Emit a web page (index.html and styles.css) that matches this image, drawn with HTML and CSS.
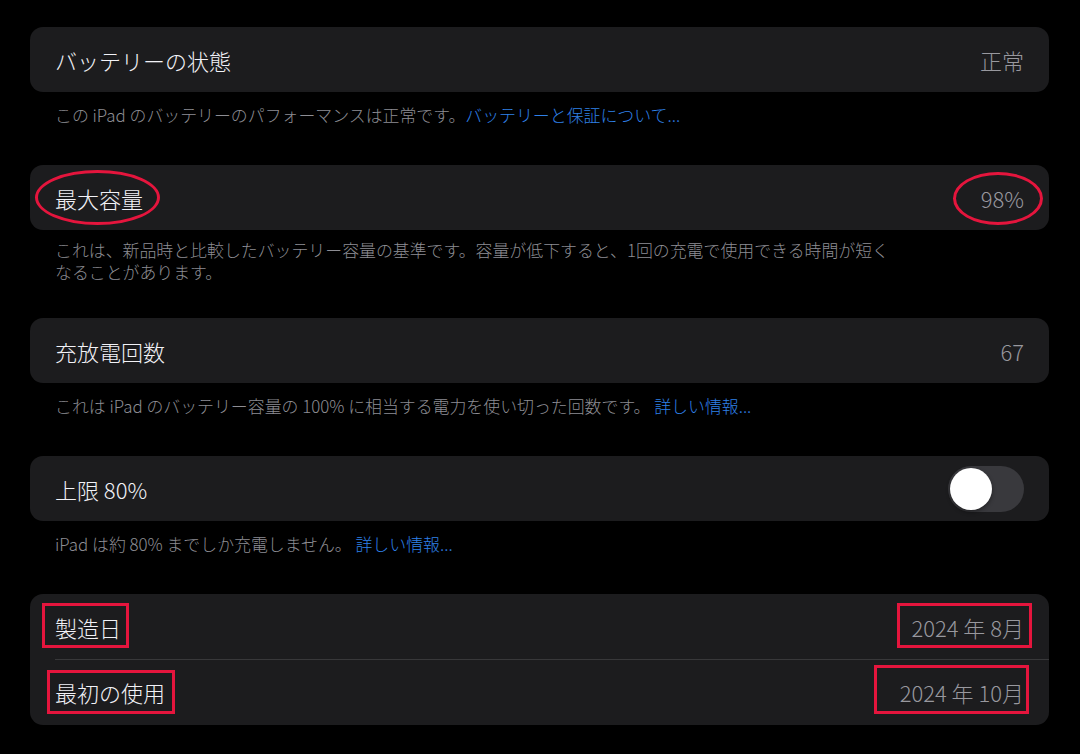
FILE: index.html
```html
<!DOCTYPE html>
<html lang="ja">
  <head>
    <meta charset="UTF-8" />
    <meta name="viewport" content="width=device-width, initial-scale=1.0" />
    <title>バッテリーの状態</title>
    <link rel="stylesheet" href="styles.css">
  </head>
  <body>
    <div class="page">
      <section class="group">
        <div class="card">
          <div class="row">
            <span class="label">バッテリーの状態</span>
            <span class="value">正常</span>
          </div>
        </div>
        <p class="footer">この iPad のバッテリーのパフォーマンスは正常です。<a class="link">バッテリーと保証について...</a></p>
      </section>

      <section class="group tight">
        <div class="card">
          <div class="row">
            <span class="label mark ellipse-a">最大容量</span>
            <span class="value mark ellipse-b">98%</span>
          </div>
        </div>
        <p class="footer">これは、新品時と比較したバッテリー容量の基準です。容量が低下すると、1回の充電で使用できる時間が短く<br>なることがあります。</p>
      </section>

      <section class="group">
        <div class="card">
          <div class="row">
            <span class="label">充放電回数</span>
            <span class="value">67</span>
          </div>
        </div>
        <p class="footer">これは iPad のバッテリー容量の 100% に相当する電力を使い切った回数です。 <a class="link">詳しい情報...</a></p>
      </section>

      <section class="group">
        <div class="card">
          <div class="row">
            <span class="label">上限 80%</span>
            <span class="toggle"><span class="knob"></span></span>
          </div>
        </div>
        <p class="footer">iPad は約 80% までしか充電しません。 <a class="link">詳しい情報...</a></p>
      </section>

      <section class="group">
        <div class="card">
          <div class="row">
            <span class="label mark box-a">製造日</span>
            <span class="value mark box-c">2024 年 8月</span>
          </div>
          <div class="row divided">
            <span class="label mark box-b">最初の使用</span>
            <span class="value mark box-d">2024 年 10月</span>
          </div>
        </div>
      </section>
    </div>
  </body>
</html>
```

FILE: styles.css
```css
html, body {
  margin: 0;
  background: #000000;
}
body {
  font-family: "Noto Sans CJK JP", "Noto Sans", sans-serif;
  color: #ffffff;
}
.page {
  padding: 27px 31px 0 30px;
}
.group {
  margin-bottom: 39px;
}
.group.tight {
  margin-bottom: 35px;
}
.group.tight .footer {
  margin-top: 9px;
}
.card {
  background: #1c1c1e;
  border-radius: 13px;
}
.row {
  height: 65px;
  padding: 0 25px;
  display: flex;
  align-items: center;
  justify-content: space-between;
  position: relative;
}
.row.divided::before {
  content: "";
  position: absolute;
  left: 25px;
  right: 0;
  top: 0;
  border-top: 1px solid #38383a;
}
.card .row.divided {
  height: 66px;
}
.label {
  font-size: 22px;
  font-weight: 300;
  line-height: 28px;
  color: #f2f2f7;
}
.value {
  font-size: 22px;
  font-weight: 300;
  line-height: 28px;
  color: #98989e;
}
.footer {
  margin: 12px 0 0 25px;
  font-size: 16.9px;
  font-weight: 300;
  line-height: 22px;
  color: #8d8d93;
}
.link {
  color: #2f80e8;
}
.toggle {
  width: 76px;
  height: 46px;
  border-radius: 23px;
  background: #39393d;
  display: flex;
  align-items: center;
  padding: 0 2px;
  box-sizing: border-box;
}
.knob {
  width: 42px;
  height: 42px;
  border-radius: 50%;
  background: #ffffff;
  box-shadow: 0 2px 4px rgba(0, 0, 0, 0.4);
}

/* red annotation marks drawn over the screenshot */
.mark {
  position: relative;
}
.mark::after {
  content: "";
  position: absolute;
  border: 3px solid #e5153d;
  box-sizing: border-box;
}
.ellipse-a::after {
  left: -20px;
  right: -17px;
  top: -14px;
  bottom: -13px;
  border-radius: 50%;
}
.ellipse-b::after {
  left: -28px;
  right: -19px;
  top: -12px;
  bottom: -13px;
  border-radius: 50%;
}
.box-a::after {
  left: -13px;
  right: -8px;
  top: -10px;
  bottom: -7px;
}
.box-b::after {
  left: -8px;
  right: -10px;
  top: -8px;
  bottom: -8px;
}
.box-c::after {
  left: -14px;
  right: -8px;
  top: -10px;
  bottom: -7px;
}
.box-d::after {
  left: -26px;
  right: -5px;
  top: -13px;
  bottom: -8px;
}
```
